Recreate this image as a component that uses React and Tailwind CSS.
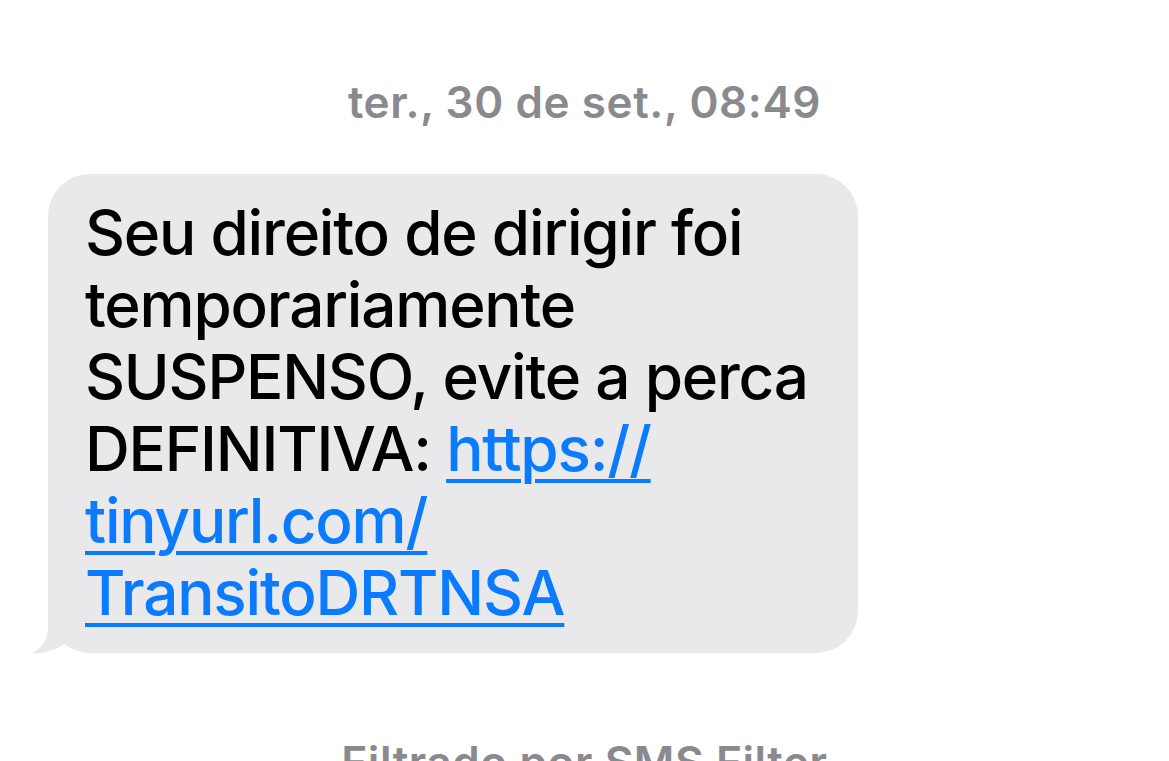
export default function App() {
  const font = { fontFamily: 'Inter, "Noto Sans", sans-serif' };
  return (
    <div className="w-[1169px] h-[761px] bg-white overflow-hidden relative" style={font}>
      <div className="flex flex-col">
        <div className="pt-[77px] text-center text-[44px] leading-[50px] font-semibold text-[#8a8a8e] tracking-[0.6px]">
          ter., 30 de set., 08:49
        </div>
        <div className="pt-[47px] pl-[48px]">
          <div className="relative w-[810px]">
            <svg className="absolute left-[-16px] bottom-0" width="40" height="50" viewBox="-16 -50 40 50">
              <path d="M0 -45 L0 -27 C0 -12 -8 -3 -16 0 C-4 1 8 -3 16 -9 L16 -45 Z" fill="#e9e9eb" />
            </svg>
            <div className="relative bg-[#e9e9eb] rounded-[42px] pl-[37px] pr-[20px] pt-[23px] pb-[24px] text-[62px] leading-[72px] text-black font-medium tracking-[-1.2px]">
              <div>Seu direito de dirigir foi</div>
              <div>temporariamente</div>
              <div>SUSPENSO, evite a perca</div>
              <div>
                DEFINITIVA:{' '}
                <span className="text-[#0a7aff] underline decoration-[4px] underline-offset-[8px]">https://</span>
              </div>
              <div className="text-[#0a7aff] underline decoration-[4px] underline-offset-[8px]">tinyurl.com/</div>
              <div className="text-[#0a7aff] underline decoration-[4px] underline-offset-[8px]">TransitoDRTNSA</div>
            </div>
          </div>
        </div>
        <div className="pt-[84px] text-center text-[44px] leading-[50px] font-semibold text-[#8a8a8e] tracking-[0.6px]">
          Filtrado por SMS Filter
        </div>
      </div>
    </div>
  );
}
